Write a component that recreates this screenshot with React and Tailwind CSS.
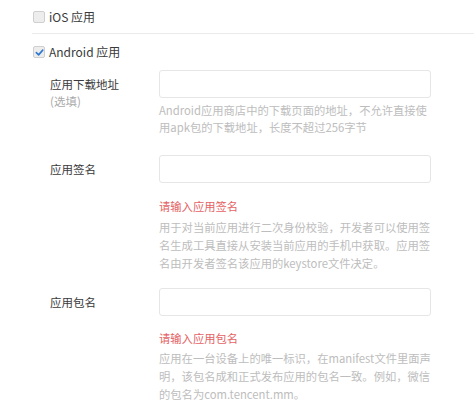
import React, { useState } from 'react';

const Checkbox = ({ checked, onChange, label }) => (
  <label className="flex items-center gap-[4px] cursor-pointer">
    <span
      onClick={onChange}
      className="w-[12px] h-[12px] rounded-[2px] border border-[#cfcfcf] bg-[#ededed] flex items-center justify-center"
    >
      {checked && (
        <svg width="9" height="9" viewBox="0 0 10 10">
          <path d="M1.5 5.2 L4 7.6 L8.6 2.4" fill="none" stroke="#2f78d0" strokeWidth="1.8" strokeLinecap="round" strokeLinejoin="round" />
        </svg>
      )}
    </span>
    <span className="text-[12px] text-[#3a3a3a]">{label}</span>
  </label>
);

const Lines = ({ lines, className }) => (
  <div className={className}>
    {lines.map((l, i) => (
      <div key={i} className="whitespace-nowrap">{l}</div>
    ))}
  </div>
);

const App = () => {
  const [ios, setIos] = useState(false);
  const [android, setAndroid] = useState(true);

  return (
    <div
      className="w-full h-[416px] bg-white overflow-hidden"
      style={{ fontFamily: '"Microsoft YaHei", "Noto Sans CJK SC", "Noto Sans", sans-serif' }}
    >
      {/* platforms */}
      <div className="h-[33px] pl-[33px] flex items-center">
        <Checkbox checked={ios} onChange={() => setIos(!ios)} label="iOS 应用" />
      </div>
      <div className="ml-[32px] border-t border-[#ebebeb]" />
      <div className="h-[36px] pl-[33px] flex items-center">
        <Checkbox checked={android} onChange={() => setAndroid(!android)} label="Android 应用" />
      </div>

      {/* download url */}
      <div className="flex pl-[50px]">
        <div className="w-[109px] pt-[6px] text-[11.5px] leading-[17px]">
          <div className="text-[#3a3a3a]">应用下载地址</div>
          <div className="text-[#aaa]">(选填)</div>
        </div>
        <div className="w-[272px]">
          <input className="w-full h-[28px] border border-[#e6e6e6] rounded-[3px] outline-none px-2 text-[12px]" />
          <Lines
            className="mt-[4px] text-[11.3px] leading-[17px] text-[#bdbdbd]"
            lines={['Android应用商店中的下载页面的地址，不允许直接使', '用apk包的下载地址，长度不超过256字节']}
          />
        </div>
      </div>

      {/* signature */}
      <div className="flex pl-[50px] mt-[19px]">
        <div className="w-[109px] pt-[6px] text-[11.5px] leading-[17px] text-[#3a3a3a]">应用签名</div>
        <div className="w-[272px]">
          <input className="w-full h-[28px] border border-[#e6e6e6] rounded-[3px] outline-none px-2 text-[12px]" />
          <div className="mt-[14px] text-[11.3px] leading-[18px] text-[#e46264]">请输入应用签名</div>
          <Lines
            className="mt-[3px] text-[11.3px] leading-[18px] text-[#bdbdbd]"
            lines={[
              '用于对当前应用进行二次身份校验，开发者可以使用签',
              '名生成工具直接从安装当前应用的手机中获取。应用签',
              '名由开发者签名该应用的keystore文件决定。',
            ]}
          />
        </div>
      </div>

      {/* package name */}
      <div className="flex pl-[50px] mt-[16px]">
        <div className="w-[109px] pt-[6px] text-[11.5px] leading-[17px] text-[#3a3a3a]">应用包名</div>
        <div className="w-[272px]">
          <input className="w-full h-[28px] border border-[#e6e6e6] rounded-[3px] outline-none px-2 text-[12px]" />
          <div className="mt-[13px] text-[11.3px] leading-[18px] text-[#e46264]">请输入应用包名</div>
          <Lines
            className="mt-[2px] text-[11.3px] leading-[18px] text-[#bdbdbd]"
            lines={[
              '应用在一台设备上的唯一标识，在manifest文件里面声',
              '明，该包名成和正式发布应用的包名一致。例如，微信',
              '的包名为com.tencent.mm。',
            ]}
          />
        </div>
      </div>
    </div>
  );
};

export default App;
